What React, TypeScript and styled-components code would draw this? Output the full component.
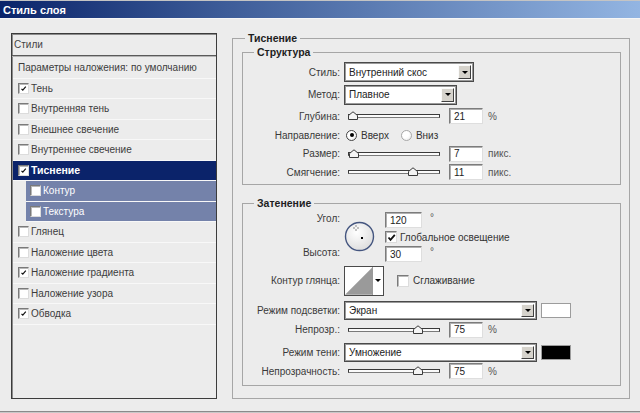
import React from 'react';
import styled, { createGlobalStyle } from 'styled-components';

const GlobalStyle = createGlobalStyle`
  html, body { margin: 0; padding: 0; background: #ececec; }
  body {
    font-family: "Liberation Sans", Arial, sans-serif;
    font-size: 10px;
    color: #333;
  }
`;

const Window = styled.div`
  width: 640px;
  height: 413px;
  box-sizing: border-box;
  background: #ececec;
  display: flex;
  flex-direction: column;
  overflow: hidden;
  box-shadow: inset 0 -1px 0 #c8c8c8, inset 0 -2px 0 #8a8a8a;
`;

const TitleBar = styled.div`
  height: 17px;
  border-top: 1px solid #c4c4c4;
  border-bottom: 1px solid #f6f6f6;
  background: linear-gradient(to right, #0a246a 0%, #3d5c98 35%, #93b5e2 100%);
  color: #fff;
  font-size: 11px;
  font-weight: bold;
  display: flex;
  align-items: center;
  padding-left: 3px;
`;

const Main = styled.div`
  display: flex;
  padding: 12px 0 0 11px;
`;

/* ---------- left list ---------- */

const StylesPanel = styled.div`
  width: 206px;
  height: 366px;
  margin-top: 2px;
  box-sizing: border-box;
  border: 1px solid #3c3c3c;
  box-shadow: inset 1px 1px 0 #8c8c8c;
  display: flex;
  flex-direction: column;
`;

const PanelHeader = styled.div`
  height: 21px;
  display: flex;
  align-items: center;
  padding-left: 2px;
  color: #444;
  border-bottom: 1px solid #5a5a5a;
  box-shadow: 0 1px 0 #b4b4b4;
  margin-bottom: 2px;
`;

const ListRow = styled.div<{ $selected?: boolean; $sub?: boolean }>`
  height: 20.5px;
  box-sizing: border-box;
  display: flex;
  align-items: center;
  gap: 2px;
  padding-left: ${p => (p.$sub ? 4 : 5)}px;
  margin-left: ${p => (p.$sub ? 14 : 1)}px;
  border-bottom: 1px solid #f8f8f8;
  background: ${p => (p.$selected ? '#0b236a' : p.$sub ? '#7482aa' : 'transparent')};
  color: ${p => (p.$selected || p.$sub ? '#fff' : '#3c3c3c')};
  font-weight: ${p => (p.$selected ? 'bold' : 'normal')};
  font-size: ${p => (p.$selected ? 10.5 : 10)}px;
  white-space: nowrap;
`;

const Box = styled.span<{ $size?: number }>`
  width: ${p => p.$size ?? 11}px;
  height: ${p => p.$size ?? 11}px;
  box-sizing: border-box;
  flex-shrink: 0;
  background: #fff;
  border: 1px solid;
  border-color: #7a7a7a #dcdcdc #dcdcdc #7a7a7a;
  box-shadow: inset 1px 1px 0 #b8b8b8;
  display: inline-flex;
  align-items: center;
  justify-content: center;
`;

const Check = ({ bold }: { bold?: boolean }) => (
  <svg width="9" height="9" viewBox="0 0 9 9">
    <path
      d={bold ? 'M1.5 4.5 L3.5 6.8 L7.8 1.8' : 'M2.5 4.8 L3.8 6.2 L6.8 2.6'}
      fill="none"
      stroke="#111"
      strokeWidth={bold ? 1.8 : 1.2}
    />
  </svg>
);

const CheckBox = ({ checked, size, bold }: { checked?: boolean; size?: number; bold?: boolean }) => (
  <Box $size={size}>{checked && <Check bold={bold} />}</Box>
);

/* ---------- right groups ---------- */

const RightCol = styled.div`
  margin-left: 15px;
`;

const Group = styled.fieldset<{ $outer?: boolean }>`
  margin: ${p => (p.$outer ? '0' : '0 9px')};
  padding: 0;
  border: 1px solid #a6a6a6;
  box-sizing: border-box;
  width: ${p => (p.$outer ? 398 : 379)}px;
  height: ${p => (p.$outer ? '368px' : 'auto')};
  min-width: 0;
`;

const GroupTitle = styled.legend<{ $outer?: boolean }>`
  font-weight: bold;
  font-size: 10.5px;
  color: #1e1e1e;
  padding: 0 3px;
  margin-left: ${p => (p.$outer ? 12 : 11)}px;
  line-height: 14px;
`;

const GroupBody = styled.div<{ $top: number; $bottom: number }>`
  padding: ${p => p.$top}px 0 ${p => p.$bottom}px;
`;

const Row = styled.div<{ $h: number; $mt?: number }>`
  height: ${p => p.$h}px;
  margin-top: ${p => p.$mt ?? 0}px;
  display: flex;
  align-items: center;
  white-space: nowrap;
`;

const Label = styled.span`
  width: 97px;
  margin-right: 4px;
  text-align: right;
  color: #3a3a3a;
  flex-shrink: 0;
`;

const SelectBox = styled.div<{ $w: number; $h?: number }>`
  width: ${p => p.$w}px;
  height: ${p => p.$h ?? 20}px;
  box-sizing: border-box;
  border: 1px solid #4a4a4a;
  box-shadow: inset 0 0 0 1px #9a9a9a;
  background: #fff;
  display: flex;
  align-items: center;
  padding: 2px;
`;

const SelectText = styled.span`
  flex: 1;
  padding-left: 2px;
  color: #222;
`;

const DropButton = styled.span`
  width: 13px;
  align-self: stretch;
  box-sizing: border-box;
  background: #d6d3cc;
  border: 1px solid;
  border-color: #fafafa #404040 #404040 #fafafa;
  display: flex;
  align-items: center;
  justify-content: center;
`;

const Arrow = styled.span`
  width: 0;
  height: 0;
  border-left: 3px solid transparent;
  border-right: 3px solid transparent;
  border-top: 3px solid #000;
`;

const Select = ({ w, h, value }: { w: number; h?: number; value: string }) => (
  <SelectBox $w={w} $h={h}>
    <SelectText>{value}</SelectText>
    <DropButton>
      <Arrow />
    </DropButton>
  </SelectBox>
);

const SliderWrap = styled.div`
  position: relative;
  width: 92px;
  height: 10px;
  margin-left: 4px;
  display: flex;
  align-items: center;
`;

const Track = styled.div`
  width: 100%;
  height: 4px;
  box-sizing: border-box;
  border: 1px solid #3a3a3a;
  border-bottom-color: #7a7a7a;
  background: #fafafa;
`;

const Thumb = styled.svg`
  position: absolute;
  top: 0;
`;

const Slider = ({ pos }: { pos: number }) => (
  <SliderWrap>
    <Track />
    <Thumb width="10" height="9" viewBox="0 0 10 9" style={{ left: pos }}>
      <path d="M0.5 8.5 L0.5 4.5 L5 0.8 L9.5 4.5 L9.5 8.5 Z" fill="#f4f4f4" stroke="#3a3a3a" />
    </Thumb>
  </SliderWrap>
);

const Field = styled.span<{ $w?: number; $ml?: number }>`
  width: ${p => p.$w ?? 34}px;
  height: 16px;
  margin-left: ${p => p.$ml ?? 9}px;
  box-sizing: border-box;
  background: #fff;
  border: 1px solid;
  border-color: #7c7c7c #dedede #dedede #7c7c7c;
  box-shadow: inset 1px 1px 0 #b0b0b0;
  padding-left: 4px;
  display: flex;
  align-items: center;
  color: #222;
  flex-shrink: 0;
`;

const Unit = styled.span<{ $sup?: boolean }>`
  margin-left: 5px;
  color: #555;
  align-self: ${p => (p.$sup ? 'flex-start' : 'center')};
`;

const RadioCircle = styled.span<{ $on?: boolean }>`
  width: 11px;
  height: 11px;
  box-sizing: border-box;
  border-radius: 50%;
  border: 1px solid ${p => (p.$on ? '#444' : '#a8a8a8')};
  background: radial-gradient(circle at 35% 35%, #fff 40%, #e6e6e6 100%);
  display: inline-flex;
  align-items: center;
  justify-content: center;
  flex-shrink: 0;
  &::after {
    content: '';
    width: 4px;
    height: 4px;
    border-radius: 50%;
    background: ${p => (p.$on ? '#000' : 'transparent')};
  }
`;

const RadioItem = styled.span<{ $ml: number }>`
  display: inline-flex;
  align-items: center;
  gap: 4px;
  margin-left: ${p => p.$ml}px;
  color: #333;
`;

const AngleBlock = styled.div`
  display: flex;
  height: 53px;
  margin-top: 1px;
`;

const AngleLabels = styled.div`
  width: 97px;
  margin-right: 4px;
  display: flex;
  flex-direction: column;
  justify-content: space-between;
  padding: 1px 0 4px;
  text-align: right;
  color: #3a3a3a;
  line-height: 14px;
`;

const Dial = styled.svg`
  margin-top: 10px;
  flex-shrink: 0;
`;

const AngleControls = styled.div`
  margin-left: 10px;
  display: flex;
  flex-direction: column;
  padding-top: 1px;
`;

const InlineRow = styled.div<{ $h: number }>`
  display: flex;
  align-items: center;
  height: ${p => p.$h}px;
  gap: 3px;
`;

const ContourPicker = styled.div`
  width: 40px;
  height: 30px;
  box-sizing: border-box;
  border: 1px solid #4a4a4a;
  background: #fff;
  display: flex;
`;

const ContourDrop = styled.span`
  width: 10px;
  border-left: 1px solid #9a9a9a;
  display: flex;
  align-items: center;
  justify-content: center;
`;

const CheckLabel = styled.span<{ $ml: number }>`
  display: inline-flex;
  align-items: center;
  gap: 4px;
  margin-left: ${p => p.$ml}px;
  color: #333;
`;

const Swatch = styled.span<{ $color: string }>`
  width: 30px;
  height: 15px;
  margin-left: 4px;
  box-sizing: border-box;
  border: 1px solid #9c9c9c;
  background: ${p => p.$color};
`;

const layers: { name: string; checked?: boolean; selected?: boolean; sub?: boolean }[] = [
  { name: 'Тень', checked: true },
  { name: 'Внутренняя тень' },
  { name: 'Внешнее свечение' },
  { name: 'Внутреннее свечение' },
  { name: 'Тиснение', checked: true, selected: true },
  { name: 'Контур', sub: true },
  { name: 'Текстура', sub: true },
  { name: 'Глянец' },
  { name: 'Наложение цвета' },
  { name: 'Наложение градиента', checked: true },
  { name: 'Наложение узора' },
  { name: 'Обводка', checked: true },
];

export default function App() {
  return (
    <>
      <GlobalStyle />
      <Window>
        <TitleBar>Стиль слоя</TitleBar>
        <Main>
          <StylesPanel>
            <PanelHeader>Стили</PanelHeader>
            <ListRow>Параметры наложения: по умолчанию</ListRow>
            {layers.map(l => (
              <ListRow key={l.name} $selected={l.selected} $sub={l.sub}>
                <CheckBox checked={l.checked} />
                {l.name}
              </ListRow>
            ))}
          </StylesPanel>

          <RightCol>
            <Group $outer>
              <GroupTitle $outer>Тиснение</GroupTitle>
              <Group>
                <GroupTitle>Структура</GroupTitle>
                <GroupBody $top={2} $bottom={3}>
                  <Row $h={22}>
                    <Label>Стиль:</Label>
                    <Select w={130} value="Внутренний скос" />
                  </Row>
                  <Row $h={23}>
                    <Label>Метод:</Label>
                    <Select w={113} value="Плавное" />
                  </Row>
                  <Row $h={20}>
                    <Label>Глубина:</Label>
                    <Slider pos={0} />
                    <Field>21</Field>
                    <Unit>%</Unit>
                  </Row>
                  <Row $h={18}>
                    <Label>Направление:</Label>
                    <RadioItem $ml={2}>
                      <RadioCircle $on />
                      Вверх
                    </RadioItem>
                    <RadioItem $ml={12}>
                      <RadioCircle />
                      Вниз
                    </RadioItem>
                  </Row>
                  <Row $h={19}>
                    <Label>Размер:</Label>
                    <Slider pos={1} />
                    <Field>7</Field>
                    <Unit>пикс.</Unit>
                  </Row>
                  <Row $h={18}>
                    <Label>Смягчение:</Label>
                    <Slider pos={60} />
                    <Field>11</Field>
                    <Unit>пикс.</Unit>
                  </Row>
                </GroupBody>
              </Group>

              <Group style={{ marginTop: 11 }}>
                <GroupTitle>Затенение</GroupTitle>
                <GroupBody $top={0} $bottom={6}>
                  <AngleBlock>
                    <AngleLabels>
                      <span>Угол:</span>
                      <span>Высота:</span>
                    </AngleLabels>
                    <Dial width="31" height="31" viewBox="0 0 31 31">
                      <defs>
                        <radialGradient id="dialFill" cx="40%" cy="35%" r="70%">
                          <stop offset="0%" stopColor="#ffffff" />
                          <stop offset="100%" stopColor="#dcdcdc" />
                        </radialGradient>
                      </defs>
                      <circle cx="15.5" cy="15.5" r="14" fill="url(#dialFill)" stroke="#44557f" strokeWidth="1.4" />
                      <g stroke="#8a8a8a" strokeWidth="1">
                        <line x1="12" y1="4" x2="12" y2="6" />
                        <line x1="12" y1="8" x2="12" y2="10" />
                        <line x1="9" y1="7" x2="11" y2="7" />
                        <line x1="13" y1="7" x2="15" y2="7" />
                      </g>
                      <rect x="17" y="16" width="2" height="2" fill="#000" />
                    </Dial>
                    <AngleControls>
                      <InlineRow $h={16}>
                        <Field $w={37} $ml={0}>120</Field>
                        <Unit $sup>°</Unit>
                      </InlineRow>
                      <InlineRow $h={18}>
                        <CheckBox checked size={12} bold />
                        Глобальное освещение
                      </InlineRow>
                      <InlineRow $h={16}>
                        <Field $w={37} $ml={0}>30</Field>
                        <Unit $sup>°</Unit>
                      </InlineRow>
                    </AngleControls>
                  </AngleBlock>

                  <Row $h={33}>
                    <Label>Контур глянца:</Label>
                    <ContourPicker>
                      <svg width="28" height="28" viewBox="0 0 28 28">
                        <polygon points="0,28 28,0 28,28" fill="#9a9a9a" />
                      </svg>
                      <ContourDrop>
                        <Arrow />
                      </ContourDrop>
                    </ContourPicker>
                    <CheckLabel $ml={13}>
                      <CheckBox size={12} />
                      Сглаживание
                    </CheckLabel>
                  </Row>
                  <Row $h={21} $mt={3}>
                    <Label>Режим подсветки:</Label>
                    <Select w={193} h={19} value="Экран" />
                    <Swatch $color="#ffffff" />
                  </Row>
                  <Row $h={17}>
                    <Label>Непрозр.:</Label>
                    <Slider pos={65} />
                    <Field>75</Field>
                    <Unit>%</Unit>
                  </Row>
                  <Row $h={22} $mt={3}>
                    <Label>Режим тени:</Label>
                    <Select w={193} h={19} value="Умножение" />
                    <Swatch $color="#000000" />
                  </Row>
                  <Row $h={16}>
                    <Label>Непрозрачность:</Label>
                    <Slider pos={65} />
                    <Field>75</Field>
                    <Unit>%</Unit>
                  </Row>
                </GroupBody>
              </Group>
            </Group>
          </RightCol>
        </Main>
      </Window>
    </>
  );
}
